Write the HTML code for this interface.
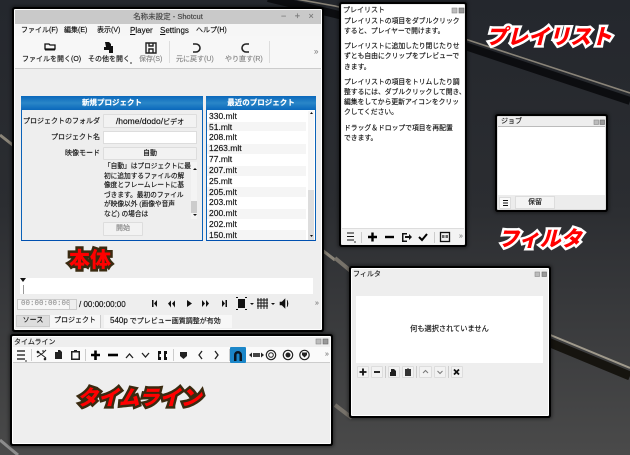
<!DOCTYPE html>
<html lang="ja"><head><meta charset="utf-8"><style>
html,body{margin:0;padding:0;width:630px;height:455px;overflow:hidden;background:#333}
#r{position:absolute;left:0;top:0;width:630px;height:455px;overflow:hidden;filter:blur(.35px);font-family:"Liberation Sans","Noto Sans CJK JP",sans-serif;color:#111;font-size:7px;line-height:11px;-webkit-text-stroke:.15px currentColor}
#r div{position:absolute;white-space:nowrap;box-sizing:border-box}
.c{text-align:center}.g{color:#888}
.btn{background:#f2f2f2;border:1px solid #ddd;border-radius:1px;text-align:center}
#r .lab{font-weight:900;color:#f00;line-height:24px;font-family:"Noto Sans CJK JP",sans-serif;paint-order:stroke fill;stroke-linejoin:round}
#r .lw{-webkit-text-stroke:5px #fff}
#r .ld{-webkit-text-stroke:5px #3a2a10}
.win{box-shadow:0 0 0 2px #000,0 0 3px 3px rgba(0,0,0,.45);border-radius:1px}
.li{left:209px;width:97px;height:11px;font-size:8.500px;line-height:11px}
.m{font-size:8px}
svg{position:absolute;overflow:visible}
</style></head><body><div id="r">
<svg style="left:0;top:0" width="630" height="455">
<defs><linearGradient id="bg" x1="0" y1="0" x2="0" y2="1"><stop offset="0" stop-color="#24272d"/><stop offset=".45" stop-color="#2b2d31"/><stop offset="1" stop-color="#4a4a4a"/></linearGradient></defs>
<rect width="630" height="455" fill="url(#bg)"/>
<g fill="none">
<path d="M268 -2L335 14L465 46L630 101" stroke="#0c0d10" stroke-width="8"/>
<path d="M268 -6L335 6L465 39L630 93" stroke="#8a8478" stroke-width="1.600"/>
<path d="M0 135L14 146" stroke="#8a8478" stroke-width="3"/>
<path d="M322 250L335 260" stroke="#8a8478" stroke-width="3"/>
<path d="M335 258L352 272" stroke="#77726a" stroke-width="4"/>
<path d="M548 342L630 376" stroke="#16140f" stroke-width="9"/>
<path d="M548 334L630 368" stroke="#a09a8c" stroke-width="2"/>
<path d="M0 440L18 455" stroke="#8d8d8d" stroke-width="3"/>
<path d="M335 405L352 418" stroke="#77726a" stroke-width="4"/>
</g></svg>

<!-- main window -->
<div class="win" style="left:14px;top:9px;width:308px;height:321px;background:#eee;border:1px solid #fff"></div>
<div style="left:15px;top:10px;width:306px;height:14px;background:#c9c9c9"></div>
<div class="c" style="left:15px;top:11px;width:306px;color:#444;font-size:7.500px">名称未設定 - Shotcut</div>
<div style="left:281px;top:11px;color:#777;word-spacing:6px;font-size:9px">− + ×</div>
<div style="left:15px;top:24px;width:306px;height:12px;background:#f6f6f6"></div>
<div style="left:21px;top:25px">ファイル(F)</div><div style="left:64px;top:25px">編集(E)</div><div style="left:97px;top:25px">表示(V)</div><div class="m" style="left:130px;top:25px"><u>P</u>layer</div><div class="m" style="left:160px;top:25px"><u>S</u>ettings</div><div style="left:196px;top:25px">ヘルプ(H)</div>
<div style="left:15px;top:36px;width:306px;height:33px;background:#f7f7f7;border-bottom:1px solid #ccc"></div>
<div style="left:22px;top:54px">ファイルを開く(O)</div>
<div style="left:88px;top:54px">その他を開く</div>
<div class="g" style="left:139px;top:54px">保存(S)</div>
<div class="g" style="left:176px;top:54px">元に戻す(U)</div>
<div class="g" style="left:225px;top:54px">やり直す(R)</div>
<div class="g" style="left:314px;top:46px;font-size:8px">»</div>
<svg style="left:0;top:0" width="330" height="70">
<path d="M45 44h4l1 1h5v4h-10z" fill="none" stroke="#111" stroke-width="1.300"/><path d="M45 49h10v1.500h-10z" fill="#111"/>
<path d="M105 42h4l2 2v2h2v7h-4v-3h-5v-3h2z" fill="#111"/>
<path d="M146 43h10v10h-10zM149 43v3h4v-3M149 49h4v4h-4z" fill="none" stroke="#222" stroke-width="1.400"/>
<path d="M193 44h3a3.500 3.500 0 1 1 0 8h-3" fill="none" stroke="#222" stroke-width="1.600"/>
<path d="M249 44h-3a3.500 3.500 0 1 0 0 8h3" fill="none" stroke="#222" stroke-width="1.600"/>
<path d="M169.500 41v22M269.500 41v22" stroke="#ddd"/>
<path d="M130 63h2" stroke="#333"/>
</svg>

<!-- new project -->
<div style="left:21px;top:96px;width:182px;height:145px;background:#eee;border:1px solid #0a62b8;border-bottom:1.500px solid #0050b0"></div>
<div class="c" style="left:21px;top:96px;width:182px;height:14px;background:linear-gradient(#0a68bb,#2a86c8,#0a68bb);color:#fff;font-weight:bold;line-height:14px;font-size:7.500px">新規プロジェクト</div>
<div style="right:530px;top:116px">プロジェクトのフォルダ</div>
<div style="right:530px;top:132px">プロジェクト名</div>
<div style="right:530px;top:148px">映像モード</div>
<div class="btn" style="left:103px;top:114px;width:94px;height:14px;line-height:12px;font-size:8.500px">/home/dodo/<span style="font-size:7px">ビデオ</span></div>
<div style="left:103px;top:131px;width:94px;height:13px;background:#fff;border:1px solid #ddd"></div>
<div class="btn" style="left:103px;top:147px;width:94px;height:13px;line-height:11px">自動</div>
<div style="left:104px;top:162px;line-height:9.600px;font-size:6.700px">「自動」はプロジェクトに最<br>初に追加するファイルの解<br>像度とフレームレートに基<br>づきます。最初のファイル<br>が映像以外 (画像や音声<br>など) の場合は</div>
<div style="left:191px;top:162px;width:6px;height:57px;background:#f4f4f4"></div>
<div style="left:191px;top:201px;width:6px;height:12px;background:#ccc"></div>
<div class="btn g" style="left:103px;top:222px;width:40px;height:14px;line-height:12px">開始</div>

<!-- recent -->
<div style="left:206px;top:96px;width:110px;height:145px;background:#fff;border:1px solid #0a62b8;border-bottom:1.500px solid #0050b0"></div>
<div class="c" style="left:206px;top:96px;width:110px;height:14px;background:linear-gradient(#0a68bb,#2a86c8,#0a68bb);color:#fff;font-weight:bold;line-height:14px;font-size:7.500px">最近のプロジェクト</div>
<div style="left:207px;top:122px;width:99px;height:9px;background:#f5f5f5"></div>
<div style="left:207px;top:144px;width:99px;height:10px;background:#f5f5f5"></div>
<div style="left:207px;top:166px;width:99px;height:10px;background:#f5f5f5"></div>
<div style="left:207px;top:187px;width:99px;height:10px;background:#f5f5f5"></div>
<div style="left:207px;top:209px;width:99px;height:10px;background:#f5f5f5"></div>
<div style="left:207px;top:230px;width:99px;height:10px;background:#f5f5f5"></div>
<div class="li" style="top:111px">330.mlt</div><div class="li" style="top:122px">51.mlt</div><div class="li" style="top:132px">208.mlt</div><div class="li" style="top:143px">1263.mlt</div><div class="li" style="top:154px">77.mlt</div><div class="li" style="top:165px">207.mlt</div><div class="li" style="top:176px">25.mlt</div><div class="li" style="top:187px">205.mlt</div><div class="li" style="top:197px">203.mlt</div><div class="li" style="top:208px">200.mlt</div><div class="li" style="top:219px">202.mlt</div><div class="li" style="top:230px">150.mlt</div>
<div style="left:308px;top:111px;width:6px;height:129px;background:#f6f6f6"></div>
<div style="left:308px;top:190px;width:6px;height:50px;background:#ddd"></div>
<svg style="left:0;top:0" width="330" height="250"><path d="M193 170l2-2 2 2zM193 214l2 2 2-2zM310 114l1.500-2 1.500 2zM310 235l1.500 2 1.500-2z" fill="#111"/></svg>

<!-- player -->
<div class="lab ld" style="left:69px;top:247px;font-size:21px">本体</div>
<div style="left:20px;top:278px;width:293px;height:16px;background:#fff"></div>
<div style="left:23px;top:285px;width:1px;height:9px;background:#999"></div>
<svg style="left:0;top:0" width="30" height="285"><path d="M20 278h6l-3 4z" fill="#111"/></svg>
<div style="left:17px;top:299px;width:60px;height:11px;background:#f7f7f7;border:1px solid #ccc;color:#999;font:7.500px/9px 'Liberation Mono',monospace;padding-left:3px">00:00:00:00</div>
<div style="left:69px;top:300px;width:7px;height:9px;background:#eee;border-left:1px solid #ccc"></div>
<div style="left:79px;top:298px;font-size:8px;line-height:13px">/ 00:00:00:00</div>
<svg style="left:0;top:0" width="330" height="330" fill="#111">
<path d="M152 300h1.500v7H152zM154 303.500l3-3.500v7z"/>
<path d="M168 303.500l3-3v7zM172 303.500l3-3v7z"/>
<path d="M187 300l5 3.500-5 3.500z"/>
<path d="M202 300l3 3.500-3 3.500zM206 300l3 3.500-3 3.500z"/>
<path d="M222 300l3 3.500-3 3.500zM225.500 300h1.500v7h-1.500z"/>
<path d="M238 299h7v9h-7z"/>
<path d="M236 297h2v1h-2zM245 297h2v1h-2zM236 309h2v1h-2zM245 309h2v1h-2zM250 303h4l-2 2zM271 303h4l-2 2z"/>
<path d="M258 298v11M261 298v11M264 298v11M267 298v11M257 300h11M257 303h11M257 306h11" stroke="#111" stroke-width=".9" fill="none"/>
<path d="M280 302h2l3-3v9l-3-3h-2zM287 300q2 3.500 0 7" stroke="#111" stroke-width=".6"/>
</svg>
<div class="g" style="left:315px;top:298px;font-size:7px">»</div>
<div style="left:16px;top:315px;width:34px;height:12px;background:#ddd;border:1px solid #ccc;text-align:center;line-height:10px">ソース</div>
<div style="left:50px;top:315px;width:51px;height:13px;background:#f7f7f7;border-right:1px solid #ccc;text-align:center;line-height:12px">プロジェクト</div>
<div style="left:104px;top:315px;width:128px;height:13px;background:#f7f7f7;line-height:12px;padding-left:6px"><span style="font-size:8px">540p</span> でプレビュー画質調整が有効</div>

<!-- timeline window -->
<div class="win" style="left:12px;top:336px;width:319px;height:108px;background:#eee;border:1px solid #fff"></div>
<div style="left:14px;top:337px;color:#222;line-height:11px">タイムライン</div>
<div style="left:13px;top:347px;width:317px;height:16px;background:#fafafa;border-bottom:1px solid #ccc"></div>
<svg style="left:0;top:0" width="340" height="370">
<path d="M17 351h8M17 355h8M17 359h8" stroke="#111" stroke-width="1.200"/>
<path d="M25 361h2" stroke="#333"/>
<path d="M31.500 349v12M85.500 349v12M173.500 349v12M229.500 349v12" stroke="#ccc"/>
<path d="M37 351l9 7M37 357l6-4M43 350v2M46 350l-3 3" stroke="#222" stroke-width="1" fill="none"/>
<circle cx="38" cy="352" r="1.300" fill="#222"/><circle cx="45" cy="359" r="1.300" fill="#222"/>
<path d="M55 352h3v-2h2l2 2v7h-7z" fill="#222"/>
<path d="M71 351h3v-1h3v1h3v9h-9zM72.500 352.500v6h6v-6z" fill="#222"/>
<path d="M91 355h9M95.500 350.500v9.500" stroke="#000" stroke-width="2.600"/>
<path d="M108 355h10" stroke="#000" stroke-width="2.600"/>
<path d="M126 358l3.500-4 3.500 4M142 353l3.500 4 3.500-4" fill="none" stroke="#222" stroke-width="1.300"/>
<path d="M158 351h3v3h-1.500v3H161v3h-3zM167 351h-3v9h3v-3h-1v-3h1z" fill="#111"/>
<path d="M180 352h7v4l-3.500 3-3.500-3z" fill="#222"/>
<path d="M202 351l-3 4 3 4M215 351l3 4-3 4" fill="none" stroke="#222" stroke-width="1.300"/>
<rect x="230" y="347" width="16" height="16" rx="1" fill="#1b86c8"/>
<path d="M234 361v-6a4 4 0 0 1 8 0v6h-2.500v-6a1.500 1.500 0 0 0-3 0v6z" fill="#0a1520"/>
<path d="M249 355l3-2.500v5zM264 355l-3-2.500v5z" fill="#222"/><path d="M253 353h7v4h-7z" fill="#444"/>
<circle cx="271" cy="355" r="4.700" fill="none" stroke="#222" stroke-width="1.200"/><circle cx="271" cy="355" r="2.300" fill="none" stroke="#222"/>
<circle cx="288" cy="355" r="4.700" fill="none" stroke="#222" stroke-width="1.200"/><circle cx="288" cy="355" r="2.500" fill="#222"/>
<circle cx="304.500" cy="355" r="4.700" fill="none" stroke="#222" stroke-width="1.200"/><path d="M302 352.500h5v2.500l-2.500 2.500-2.500-2.500z" fill="#222"/>
<rect x="316" y="339" width="5" height="5" fill="#bbb" stroke="#888" stroke-width=".6"/><rect x="323" y="339" width="5" height="5" fill="#999" stroke="#666" stroke-width=".6"/>
</svg>
<div class="g" style="left:325px;top:349px;font-size:7px">»</div>
<div class="lab ld" style="left:77px;top:385px;font-size:21px;font-style:italic">タイムライン</div>

<!-- playlist -->
<div class="win" style="left:341px;top:4px;width:124px;height:241px;background:#fff;border:1px solid #eee"></div>
<div style="left:343px;top:5px;line-height:11px;color:#222">プレイリスト</div>
<div style="left:344px;top:17px;line-height:10px;font-size:6.800px">プレイリストの項目をダブルクリック<br>すると、プレイヤーで開けます。</div>
<div style="left:344px;top:42px;line-height:10.300px;font-size:6.800px">プレイリストに追加したり閉じたりせ<br>ずとも自由にクリップをプレビューで<br>きます。</div>
<div style="left:344px;top:78px;line-height:10px;font-size:6.800px">プレイリストの項目をトリムしたり調<br>整するには、ダブルクリックして開き、<br>編集をしてから更新アイコンをクリッ<br>クしてください。</div>
<div style="left:344px;top:124px;line-height:10px;font-size:6.800px">ドラッグ＆ドロップで項目を再配置<br>できます。</div>
<div style="left:342px;top:228px;width:122px;height:16px;background:#f3f3f3;border-top:1px solid #ddd"></div>
<svg style="left:0;top:0" width="630" height="250">
<path d="M347 233h7M347 236.500h7M347 240h7" stroke="#111" stroke-width="1.100"/><path d="M354 242h2" stroke="#333"/>
<path d="M361.500 232v11M434.500 232v11" stroke="#ccc"/>
<path d="M368 237h9M372.500 232.500v9" stroke="#000" stroke-width="2.400"/>
<path d="M385 237h9" stroke="#000" stroke-width="2.400"/>
<path d="M402 233h5v1.500h-3.500v6h3.500v1.500h-5z" fill="#111"/><path d="M405 236h4v-2l3 3-3 3v-2h-4z" fill="#111"/>
<path d="M419 237l3 3 5-6" fill="none" stroke="#000" stroke-width="2"/>
<rect x="440.500" y="232.500" width="9" height="9" fill="none" stroke="#111" stroke-width="1.300"/><path d="M442 235h6v3h-6z" fill="#666"/><path d="M445 235v5" stroke="#eee"/>
<rect x="452" y="8" width="5" height="5" fill="#bbb" stroke="#888" stroke-width=".6"/><rect x="459" y="8" width="5" height="5" fill="#999" stroke="#666" stroke-width=".6"/>
</svg>
<div class="g" style="left:459px;top:231px;font-size:7px">»</div>

<div class="lab lw" style="left:486px;top:24px;font-size:21px;font-style:italic">プレイリスト</div>
<div class="lab lw" style="left:498px;top:226px;font-size:21px;font-style:italic">フィルタ</div>

<!-- job -->
<div class="win" style="left:497px;top:116px;width:109px;height:94px;background:#fff;border:1px solid #ddd"></div>
<div style="left:498px;top:117px;width:107px;height:10px;background:#eee;border-bottom:1px solid #bbb"></div>
<div style="left:501px;top:116px;line-height:11px;color:#222">ジョブ</div>
<div style="left:498px;top:195px;width:107px;height:14px;background:#ececec"></div>
<div style="left:499px;top:197px;width:12px;height:12px;background:#fafafa;border:1px solid #ddd"></div>
<div style="left:515px;top:196px;width:40px;height:13px;background:#f4f4f4;border:1px solid #ddd;text-align:center;line-height:12px">保留</div>
<svg style="left:0;top:0" width="630" height="215">
<path d="M503 200.500h5M503 203h5M503 205.500h5" stroke="#111" stroke-width="1"/>
<rect x="594" y="120" width="4.500" height="4.500" fill="#bbb" stroke="#888" stroke-width=".6"/><rect x="600" y="120" width="4.500" height="4.500" fill="#999" stroke="#666" stroke-width=".6"/>
</svg>

<!-- filter -->
<div class="win" style="left:351px;top:268px;width:198px;height:148px;background:#eee;border:1px solid #fff"></div>
<div style="left:353px;top:269px;line-height:11px;color:#222">フィルタ</div>
<div style="left:356px;top:296px;width:187px;height:67px;background:#fff"></div>
<div class="c" style="left:356px;top:323px;width:187px;font-size:7.200px">何も選択されていません</div>
<div class="btn" style="left:357px;top:366px;width:12px;height:12px"></div>
<div class="btn" style="left:371px;top:366px;width:12px;height:12px"></div>
<div class="btn" style="left:388px;top:366px;width:12px;height:12px"></div>
<div class="btn" style="left:402px;top:366px;width:12px;height:12px"></div>
<div class="btn" style="left:419px;top:366px;width:13px;height:12px"></div>
<div class="btn" style="left:434px;top:366px;width:12px;height:12px"></div>
<div class="btn" style="left:451px;top:366px;width:12px;height:12px"></div>
<svg style="left:0;top:0" width="630" height="385">
<path d="M359.500 372h7M363 368.500v7" stroke="#111" stroke-width="1.800"/>
<path d="M374 372h6" stroke="#111" stroke-width="1.800"/>
<path d="M391 369h3l2 2v5h-6v-4h1z" fill="#222"/>
<path d="M405 369h2v-.5h2v.5h2v7h-6z" fill="#333"/>
<path d="M423 373l2.500-2.500 2.500 2.500M437.500 371l2.500 2.500 2.500-2.500" fill="none" stroke="#777"/>
<path d="M454 369.500l5 5M459 369.500l-5 5" stroke="#111" stroke-width="1.800"/>
<path d="M385.500 366v12M416.500 366v12M448.500 366v12" stroke="#ccc"/>
<rect x="535" y="272" width="4.500" height="4.500" fill="#bbb" stroke="#888" stroke-width=".6"/><rect x="542" y="272" width="4.500" height="4.500" fill="#999" stroke="#666" stroke-width=".6"/>
</svg>
</div></body></html>
